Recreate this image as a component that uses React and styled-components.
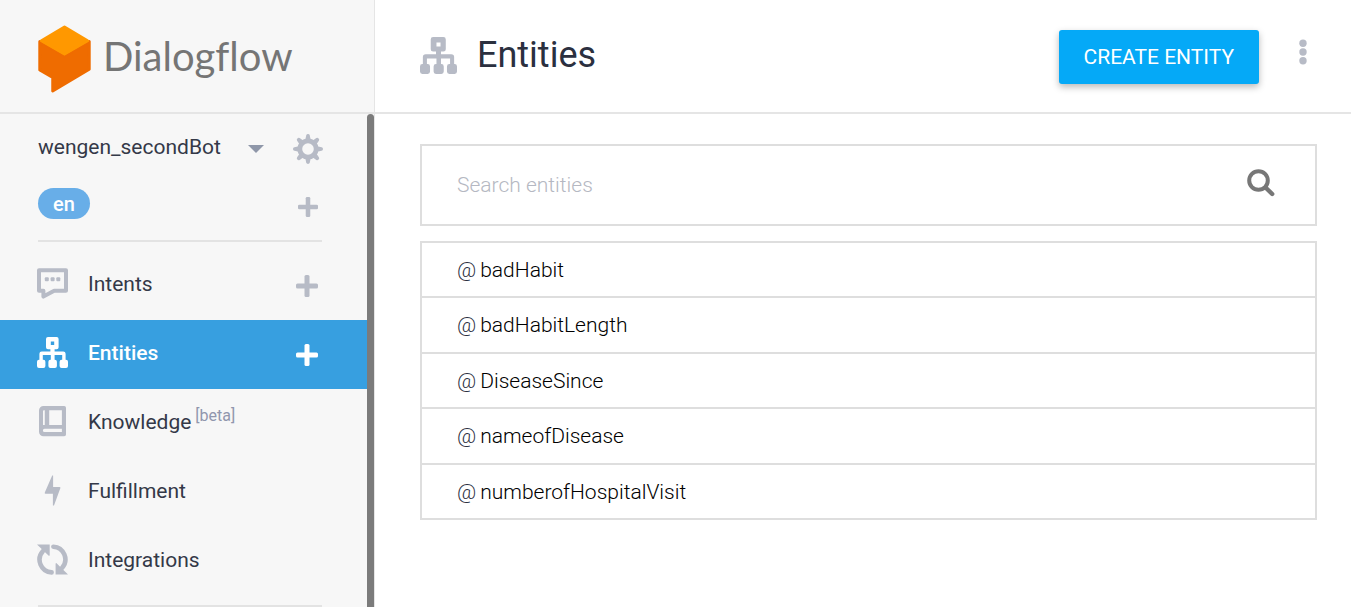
import React from "react";
import styled, { createGlobalStyle } from "styled-components";

const GlobalStyle = createGlobalStyle`
  *, *::before, *::after { box-sizing: border-box; }
  body {
    margin: 0;
    background: #fff;
    color: #2b303f;
    font-family: Roboto, "Liberation Sans", sans-serif;
    font-size: 20px;
    line-height: 24px;
  }
  button { font: inherit; color: inherit; border: 0; background: none; padding: 0; cursor: pointer; }
  svg { display: block; flex: none; }
`;

const Layout = styled.div`
  display: grid;
  grid-template-columns: 375px 1fr;
  height: 100vh;
`;

const Sidebar = styled.aside`
  display: flex;
  flex-direction: column;
  min-height: 0;
  background: #f7f7f7;
  border-right: 1px solid #e5e5e5;
`;

const Brand = styled.a`
  display: flex;
  flex: none;
  align-items: center;
  gap: 12px;
  height: 114px;
  padding: 6px 0 0 38px;
  border-bottom: 2px solid #e5e5e5;
  color: #757575;
  text-decoration: none;
`;

const Wordmark = styled.span`
  padding-bottom: 6px;
  font-family: Lato, sans-serif;
  font-size: 40px;
  line-height: 50px;
  font-variant-ligatures: none;
`;

const SidebarBody = styled.div`
  display: flex;
  flex: 1;
  min-height: 0;
`;

const NavScroll = styled.div`
  flex: 1;
  min-width: 0;
  overflow: hidden;
`;

const ScrollThumb = styled.div`
  flex: none;
  width: 7px;
  border-radius: 4px 4px 0 0;
  background: #7b7b7b;
`;

const AgentRow = styled.div`
  display: flex;
  align-items: center;
  height: 69px;
  padding: 0 44px 0 38px;
`;

const AgentPicker = styled.button`
  display: flex;
  flex: 1;
  align-items: center;
  justify-content: space-between;
  margin-right: 29px;
  padding-bottom: 3px;
  color: #343948;
  font-size: 21px;
`;

const Caret = styled.span`
  margin-top: 3px;
  border: 8px solid transparent;
  border-top-color: #8f97a9;
  border-bottom-width: 0;
`;

const IconButton = styled.button`
  display: grid;
  place-items: center;
  width: 30px;
  height: 30px;
  color: #b7bbc6;
`;

const LanguageRow = styled.div`
  display: flex;
  justify-content: space-between;
  height: 57px;
  padding: 5px 44px 0 38px;
`;

const Language = styled.button`
  width: 52px;
  height: 31px;
  border-radius: 16px;
  background: #68aee8;
  color: #fff;
  font-weight: 500;
`;

const AddButton = styled(IconButton)`
  height: 38px;
  color: ${(p) => (p.$active ? "#fff" : "#b7bbc6")};
`;

const Divider = styled.hr`
  height: 2px;
  margin: 0 45px 9px 38px;
  border: 0;
  background: #e3e3e3;
`;

const NavList = styled.ul`
  margin: 0 0 9px;
  padding: 0;
  list-style: none;
`;

const NavItem = styled.li`
  display: flex;
  align-items: center;
  height: 69px;
  padding: 0 45px 0 37px;
  background: ${(p) => (p.$active ? "#379fe0" : "transparent")};
`;

const NavLink = styled.a`
  display: flex;
  flex: 1;
  align-items: center;
  gap: 20px;
  padding-bottom: 3px;
  color: ${(p) => (p.$active ? "#fff" : "#343948")};
  font-size: 21px;
  font-weight: ${(p) => (p.$active ? 500 : 400)};
  text-decoration: none;

  svg {
    margin-bottom: 1px;
    color: ${(p) => (p.$active ? "#fff" : "#b7bbc6")};
  }
`;

const Beta = styled.sup`
  margin-left: 4px;
  color: #9096ad;
  font-size: 16px;
  line-height: 0;
`;

const Main = styled.main`
  min-width: 0;
`;

const PageHeader = styled.header`
  display: flex;
  align-items: center;
  height: 114px;
  padding: 2px 33px 0 45px;
  border-bottom: 2px solid #e5e5e5;

  > svg {
    margin-bottom: 4px;
    color: #b7bbc6;
  }
`;

const Title = styled.h1`
  flex: 1;
  margin: 0 0 4px 20px;
  font-size: 36px;
  font-weight: 400;
  line-height: 42px;
`;

const CreateButton = styled.button`
  height: 54px;
  padding: 0 25px;
  border-radius: 3px;
  background: #05a9f7;
  box-shadow: 0 3px 7px rgba(0, 0, 0, 0.28);
  color: #fff;
  font-size: 21px;
`;

const MoreButton = styled(IconButton)`
  margin: 0 0 10px 29px;
`;

const Content = styled.div`
  padding: 30px 34px 30px 45px;
`;

const SearchBox = styled.label`
  display: flex;
  align-items: center;
  height: 82px;
  margin-bottom: 15px;
  padding: 0 40px 0 35px;
  border: 2px solid #dedede;

  svg {
    margin-bottom: 4px;
    color: #777;
  }
`;

const SearchInput = styled.input`
  flex: 1;
  min-width: 0;
  padding: 0;
  border: 0;
  outline: 0;
  background: none;
  color: #000;
  font: 300 21px/26px Roboto, "Liberation Sans", sans-serif;

  &::placeholder { color: #b5b8c2; opacity: 1; }
`;

const EntityList = styled.ul`
  margin: 0;
  padding: 0;
  border: 2px solid #dedede;
  border-bottom: 0;
  list-style: none;
`;

const EntityRow = styled.li`
  display: flex;
  height: 55px;
  border-bottom: 2px solid #dedede;

  &:nth-child(even) { height: 56px; }
`;

const EntityLink = styled.a`
  display: flex;
  flex: 1;
  align-items: center;
  gap: 4px;
  padding: 0 35px;
  color: #000;
  font-size: 21px;
  font-weight: 300;
  text-decoration: none;
`;

const At = styled.span`
  color: #2b303f;
`;

const Icon = ({ size = 31, box = 31, children }) => (
  <svg width={size} height={size} viewBox={`0 0 ${box} ${box}`} fill="currentColor" aria-hidden="true">
    {children}
  </svg>
);

const LogoMark = () => (
  <svg width="53" height="68" viewBox="0 0 54 68" preserveAspectRatio="none" strokeWidth="3" strokeLinejoin="round" aria-hidden="true">
    <path d="M1.8 16.5 27 31 52.2 16.5V44.2L15 66V52.5L1.8 45Z" fill="#ef6c00" stroke="#ef6c00" />
    <path d="M27 1.6 52 16 27 30.2 2 16Z" fill="#ff9800" />
    <path d="M3.5 15.7 27 2 50.5 15.7 27 29Z" fill="#ff9800" stroke="#ff9800" />
  </svg>
);

const EntitiesIcon = ({ size }) => (
  <Icon size={size}>
    <path fillRule="evenodd" d="M11 0h8.6a2 2 0 0 1 2 2v8.2a2 2 0 0 1-2 2H17.6v2.2h8.6a2.4 2.4 0 0 1 2.4 2.4v5.9H29a2 2 0 0 1 2 2V29a2 2 0 0 1-2 2h-4.4a2 2 0 0 1-2-2v-4.3a2 2 0 0 1 2-2h.6v-4.6h-7.6v4.6h.3a2 2 0 0 1 2 2V29a2 2 0 0 1-2 2h-4.5a2 2 0 0 1-2-2v-4.3a2 2 0 0 1 2-2h.4v-4.6H5.8v4.6h.6a2 2 0 0 1 2 2V29a2 2 0 0 1-2 2H2a2 2 0 0 1-2-2v-4.3a2 2 0 0 1 2-2h.4v-5.9a2.4 2.4 0 0 1 2.4-2.4h8.6v-2.2H11a2 2 0 0 1-2-2V2a2 2 0 0 1 2-2Zm2.8 4.6v3.4h3.4V4.6Z" />
  </Icon>
);

const IntentsIcon = () => (
  <Icon>
    <path d="M2 2.3H29V22.8H17.2L6.4 28.6V22.8H2Z" fill="none" stroke="currentColor" strokeWidth="4" strokeLinejoin="round" />
    <rect x="7.8" y="9.2" width="4" height="4" rx="1" />
    <rect x="13.6" y="9.2" width="4" height="4" rx="1" />
    <rect x="19.3" y="9.2" width="4" height="4" rx="1" />
  </Icon>
);

const KnowledgeIcon = () => (
  <Icon>
    <path fillRule="evenodd" d="M6.500 0H27.200a1.800 1.800 0 0 1 1.800 1.800v26.600a1.800 1.800 0 0 1-1.800 1.800H6.500a4.500 4.500 0 0 1-4.500-4.500V4.500a4.500 4.500 0 0 1 4.500-4.500ZM6 5.200V19H7.800V4.300H6.900A.9.900 0 0 0 6 5.200ZM12.200 4.300V19H24.900V4.300ZM7.600 22.700a1.700 1.700 0 0 0 0 3.400H24.900V22.700Z" />
  </Icon>
);

const FulfillmentIcon = () => (
  <Icon>
    <path d="M15.200.5h.9V12h6.400q1.200 0 .9 1.100L17 30.500h-1.100V18.700H8.500q-1.100 0-.7-1.200Z" />
  </Icon>
);

const IntegrationsIcon = () => (
  <Icon>
    <path d="M5.800 7.300A12.700 12.700 0 0 0 14.600 28.400M16.400 2.700A12.700 12.700 0 0 1 25.200 23.700" fill="none" stroke="currentColor" strokeWidth="4.600" strokeLinecap="round" />
    <path d="M0 .4H12.700V11.600Q12 12 11.500 11.400ZM31 30.600H18.600V19.400Q19.200 18.800 19.800 19.400Z" />
  </Icon>
);

const GearIcon = () => (
  <Icon size={30} box={30}>
    <circle cx="15" cy="15" r="8.200" fill="none" stroke="currentColor" strokeWidth="4.800" />
    {[0, 45, 90, 135, 180, 225, 270, 315].map((a) => (
      <path key={a} d="M12.300 6 13.200 1.400Q13.500 0 15 0T16.800 1.400L17.700 6Z" transform={`rotate(${a} 15 15)`} />
    ))}
  </Icon>
);

const PlusIcon = ({ size = 22 }) => (
  <Icon size={size} box={22}>
    <rect x="8.500" y="0" width="5" height="22" rx="1.500" />
    <rect x="0" y="8.500" width="22" height="5" rx="1.500" />
  </Icon>
);

const MoreIcon = () => (
  <Icon size={26} box={26}>
    <circle cx="13" cy="4.300" r="3.700" />
    <circle cx="13" cy="13" r="3.700" />
    <circle cx="13" cy="21.700" r="3.700" />
  </Icon>
);

const SearchIcon = () => (
  <Icon size={28} box={28}>
    <circle cx="11.500" cy="11.500" r="9.300" fill="none" stroke="currentColor" strokeWidth="4" />
    <path d="M18.500 18.500 25.200 25" stroke="currentColor" strokeWidth="4.400" strokeLinecap="round" />
  </Icon>
);

const sections = [
  { label: "Intents", icon: IntentsIcon, canAdd: true },
  { label: "Entities", icon: EntitiesIcon, canAdd: true, active: true },
  { label: "Knowledge", icon: KnowledgeIcon, beta: true },
  { label: "Fulfillment", icon: FulfillmentIcon },
  { label: "Integrations", icon: IntegrationsIcon },
];

const entities = ["badHabit", "badHabitLength", "DiseaseSince", "nameofDisease", "numberofHospitalVisit"];

export default function App() {
  return (
    <>
      <GlobalStyle />
      <Layout>
        <Sidebar>
          <Brand href="#">
            <LogoMark />
            <Wordmark>Dialogflow</Wordmark>
          </Brand>
          <SidebarBody>
            <NavScroll>
              <AgentRow>
                <AgentPicker>
                  wengen_secondBot
                  <Caret />
                </AgentPicker>
                <IconButton aria-label="Settings"><GearIcon /></IconButton>
              </AgentRow>
              <LanguageRow>
                <Language>en</Language>
                <AddButton aria-label="Add language"><PlusIcon size={20} /></AddButton>
              </LanguageRow>
              <Divider />
              <NavList>
                {sections.map(({ label, icon: SectionIcon, canAdd, active, beta }) => (
                  <NavItem key={label} $active={active}>
                    <NavLink href="#" $active={active}>
                      <SectionIcon />
                      <span>
                        {label}
                        {beta && <Beta>[beta]</Beta>}
                      </span>
                    </NavLink>
                    {canAdd && (
                      <AddButton $active={active} aria-label={`Add to ${label}`}><PlusIcon /></AddButton>
                    )}
                  </NavItem>
                ))}
              </NavList>
              <Divider />
            </NavScroll>
            <ScrollThumb />
          </SidebarBody>
        </Sidebar>
        <Main>
          <PageHeader>
            <EntitiesIcon size={37} />
            <Title>Entities</Title>
            <CreateButton>CREATE ENTITY</CreateButton>
            <MoreButton aria-label="More options"><MoreIcon /></MoreButton>
          </PageHeader>
          <Content>
            <SearchBox>
              <SearchInput type="text" placeholder="Search entities" aria-label="Search entities" />
              <SearchIcon />
            </SearchBox>
            <EntityList>
              {entities.map((name) => (
                <EntityRow key={name}>
                  <EntityLink href="#">
                    <At>@</At>
                    {name}
                  </EntityLink>
                </EntityRow>
              ))}
            </EntityList>
          </Content>
        </Main>
      </Layout>
    </>
  );
}
